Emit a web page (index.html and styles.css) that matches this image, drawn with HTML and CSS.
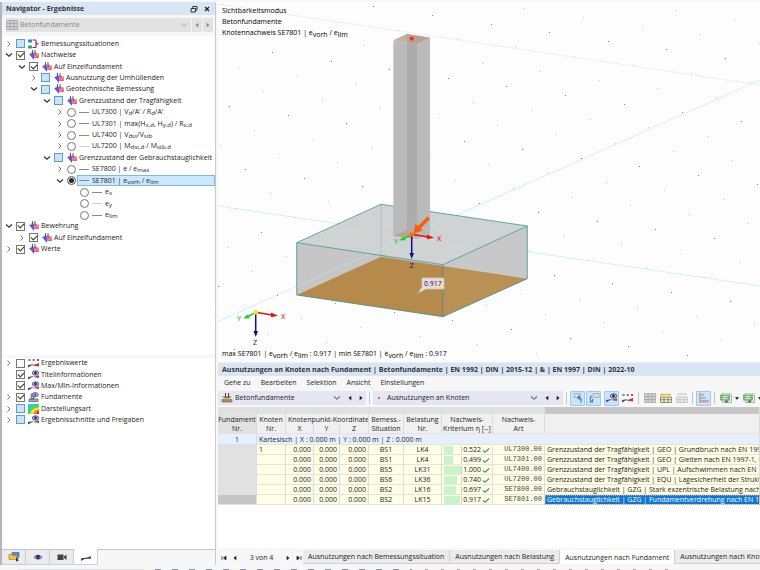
FILE: index.html
```html
<!DOCTYPE html>
<html lang="de">
  <head>
    <meta charset="utf-8" />
    <title>Ausnutzungen an Knoten nach Fundament</title>
    <link rel="stylesheet" href="styles.css">
  </head>
  <body>
    <!-- shared icons -->
    <svg class="symbols" aria-hidden="true">
      <symbol id="closed" viewBox="0 0 8 8"><path d="M2.5 1.5 5 4 2.5 6.5" fill="none" stroke="#777" /></symbol>
      <symbol id="open" viewBox="0 0 8 8"><path d="M1 2.5 4 5.3 7 2.5" fill="none" stroke="#333" stroke-width="1.2" /></symbol>
      <symbol id="left" viewBox="0 0 8 8"><path d="M5.3 1.7v4.6L2.5 4z" fill="currentColor" /></symbol>
      <symbol id="right" viewBox="0 0 8 8"><path d="M2.7 1.7v4.6L5.5 4z" fill="currentColor" /></symbol>
      <symbol id="design" viewBox="0 0 12 10">
        <path d="M1 4H6V10z" fill="#5656f8" />
        <path d="M6.200 3.500h4.600V8H6.200z" fill="#f0566c" />
        <path d="M7.300 7 10 4.500" stroke="#ffd8de" stroke-width=".8" />
        <path d="M4.500 0v4M7 0v3M2.500 3.200h6" stroke="#4a4a58" stroke-width=".9" fill="none" />
      </symbol>
      <symbol id="situation" viewBox="0 0 12 10">
        <path d="M0 .5h4v3H0z" fill="#3d7cf0" /><path d="M0 6.500h4v3H0z" fill="#23b34a" />
        <path d="M4.500 1h3.500v7.500H4.500" fill="none" stroke="#444" /><path d="M7.500 2.500 11 4.700 7.500 7z" fill="#f020e0" />
      </symbol>
      <symbol id="result" viewBox="0 0 12 10">
        <path d="M1 9V6.500L7 5.500z" fill="#2848b8" /><path d="M5 6.700 11 4v2.800z" fill="#d8302c" />
        <path d="M1 7.200 11 5.500" stroke="#333" stroke-width=".8" />
      </symbol>
      <symbol id="eyeresult" viewBox="0 0 12 10">
        <path d="M0 9.500V7l6-1z" fill="#2848b8" /><path d="M5 7 11 5.300v2.700z" fill="#d8302c" />
        <ellipse cx="7.500" cy="3" rx="3.200" ry="2.200" fill="#c4c8e6" stroke="#303878" stroke-width=".8" /><circle cx="7.500" cy="3" r="1.400" fill="#202868" />
      </symbol>
      <symbol id="values" viewBox="0 0 12 10">
        <path d="M0 9.500V7l6-1z" fill="#2848b8" /><path d="M4 7.500 11 5v3.500z" fill="#d8302c" />
        <path d="M.5 1l2 2m0-2-2 2M4.700 1l2 2m0-2-2 2M9 1l2 2m0-2-2 2" stroke="#444" stroke-width=".8" />
      </symbol>
      <symbol id="footing" viewBox="0 0 12 10">
        <path d="M1 7h9v2.500H1zM3 2h3v5H3z" fill="#aab" stroke="#556" stroke-width=".7" />
        <ellipse cx="7.200" cy="2.700" rx="3" ry="2.100" fill="#c4c8e6" stroke="#303878" stroke-width=".8" /><circle cx="7.200" cy="2.700" r="1" fill="#202868" />
      </symbol>
      <symbol id="rainbow" viewBox="0 0 12 10">
        <path d="M0 0h11v10H0z" fill="#2ec8e8" /><path d="M0 10C0 4 5 1 11 1v9z" fill="#48d848" />
        <path d="M2.500 10c0-4 4-6.500 8.500-6.500V10z" fill="#f8ec30" /><path d="M5.500 10c0-2.500 2.500-4.500 5.500-4.500V10z" fill="#f08020" /><path d="M8.500 10c0-1.500 1-2.500 2.500-2.500V10z" fill="#d82020" />
      </symbol>
      <symbol id="grid" viewBox="0 0 12 10"><path d="M.5 .5h11v9H.5zM.5 3.500h11M.5 6.500h11M4.200 .5v9M8 .5v9" fill="#d0d0d0" stroke="#a4a4a4" stroke-width=".8" /></symbol>
      <symbol id="check" viewBox="0 0 8 8"><path d="M1 4.500 3 6.300 7.200 2.500" fill="none" stroke="#3a9f62" stroke-width="1.200" /></symbol>
      <symbol id="export" viewBox="0 0 12 10">
        <path d="M2.500 0h7l2 2v7.500h-9z" fill="#f4f8f2" stroke="#7a9a7a" stroke-width=".7" /><path d="M0 1.500h10v6H0z" fill="#7fb27b" />
        <path d="M2 3.500h6M2 5.500h6M5 2.500v4" stroke="#dcecd9" stroke-width=".8" /><path d="M4 7.500h5L6.500 10z" fill="#2f7a38" />
      </symbol>
    </svg>

    <div class="window">
      <aside class="navigator">
        <header class="caption">
          <span>Navigator - Ergebnisse</span>
          <button type="button" class="plain" aria-label="Lösen"><svg viewBox="0 0 8 8"><path d="M1 3.500h4.500V7H1zM2.800 3.500v-2H7V5H5.500" fill="none" stroke="#222" stroke-width=".9" /></svg></button>
          <button type="button" class="plain" aria-label="Schließen"><svg viewBox="0 0 8 8"><path d="M2 2l4 4m0-4-4 4" stroke="#222" stroke-width="1.200" /></svg></button>
        </header>

        <div class="picker disabled">
          <svg class="icon"><use href="#grid" /></svg>
          <select aria-label="Modul" disabled><option>Betonfundamente</option></select>
          <svg class="chevron"><use href="#open" /></svg>
          <button type="button" disabled aria-label="Zurück"><svg><use href="#left" /></svg></button>
          <button type="button" disabled aria-label="Weiter"><svg><use href="#right" /></svg></button>
        </div>

        <div class="panel">
          <ul class="tree results">
            <li><button class="twist" aria-label="Öffnen"><svg><use href="#closed" /></svg></button><label><input type="checkbox" class="partial"><svg class="icon"><use href="#situation" /></svg>Bemessungssituationen</label></li>
            <li><button class="twist" aria-label="Schließen"><svg><use href="#open" /></svg></button><label><input type="checkbox" checked><svg class="icon"><use href="#design" /></svg>Nachweise</label></li>
            <li class="level-1"><button class="twist" aria-label="Schließen"><svg><use href="#open" /></svg></button><label><input type="checkbox" checked><svg class="icon"><use href="#design" /></svg>Auf Einzelfundament</label></li>
            <li class="level-2"><button class="twist" aria-label="Öffnen"><svg><use href="#closed" /></svg></button><label><input type="checkbox" class="partial"><svg class="icon"><use href="#design" /></svg>Ausnutzung der Umhüllenden</label></li>
            <li class="level-2"><button class="twist" aria-label="Schließen"><svg><use href="#open" /></svg></button><label><input type="checkbox" class="partial"><svg class="icon"><use href="#design" /></svg>Geotechnische Bemessung</label></li>
            <li class="level-3"><button class="twist" aria-label="Schließen"><svg><use href="#open" /></svg></button><label><input type="checkbox" class="partial"><svg class="icon"><use href="#design" /></svg>Grenzzustand der Tragfähigkeit</label></li>
            <li class="level-4"><button class="twist" aria-label="Öffnen"><svg><use href="#closed" /></svg></button><label><input type="radio" name="check"><i class="dash"></i><span>UL7300 | V<sub>d</sub>/A' / R<sub>d</sub>/A'</span></label></li>
            <li class="level-4"><button class="twist" aria-label="Öffnen"><svg><use href="#closed" /></svg></button><label><input type="radio" name="check"><i class="dash"></i><span>UL7301 | max(H<sub>x,d</sub>, H<sub>y,d</sub>) / R<sub>x,d</sub></span></label></li>
            <li class="level-4"><button class="twist" aria-label="Öffnen"><svg><use href="#closed" /></svg></button><label><input type="radio" name="check"><i class="dash"></i><span>UL7400 | V<sub>dst</sub>/V<sub>stb</sub></span></label></li>
            <li class="level-4"><button class="twist" aria-label="Öffnen"><svg><use href="#closed" /></svg></button><label><input type="radio" name="check"><i class="dash light"></i><span>UL7200 | M<sub>dst,d</sub> / M<sub>stb,d</sub></span></label></li>
            <li class="level-3"><button class="twist" aria-label="Schließen"><svg><use href="#open" /></svg></button><label><input type="checkbox" class="partial"><svg class="icon"><use href="#design" /></svg>Grenzzustand der Gebrauchstauglichkeit</label></li>
            <li class="level-4"><button class="twist" aria-label="Öffnen"><svg><use href="#closed" /></svg></button><label><input type="radio" name="check"><i class="dash"></i><span>SE7800 | e / e<sub>max</sub></span></label></li>
            <li class="level-4"><button class="twist" aria-label="Schließen"><svg><use href="#open" /></svg></button><label><input type="radio" name="check" checked><span class="mark"><i class="dash"></i><span>SE7801 | e<sub>vorh</sub> / e<sub>lim</sub></span></span></label></li>
            <li class="level-5"><label><input type="radio" name="part"><i class="dash"></i><span>e<sub>x</sub></span></label></li>
            <li class="level-5"><label><input type="radio" name="part"><i class="dash light"></i><span>e<sub>y</sub></span></label></li>
            <li class="level-5"><label><input type="radio" name="part"><i class="dash"></i><span>e<sub>lim</sub></span></label></li>
            <li><button class="twist" aria-label="Schließen"><svg><use href="#open" /></svg></button><label><input type="checkbox" checked><svg class="icon"><use href="#design" /></svg>Bewehrung</label></li>
            <li class="level-1"><button class="twist" aria-label="Öffnen"><svg><use href="#closed" /></svg></button><label><input type="checkbox" checked><svg class="icon"><use href="#design" /></svg>Auf Einzelfundament</label></li>
            <li><button class="twist" aria-label="Öffnen"><svg><use href="#closed" /></svg></button><label><input type="checkbox" checked><svg class="icon"><use href="#design" /></svg>Werte</label></li>
          </ul>
        </div>

        <div class="panel lower">
          <ul class="tree display">
            <li><button class="twist" aria-label="Öffnen"><svg><use href="#closed" /></svg></button><label><input type="checkbox"><svg class="icon"><use href="#values" /></svg>Ergebniswerte</label></li>
            <li class="leaf"><label><input type="checkbox" checked><svg class="icon"><use href="#eyeresult" /></svg>Titelinformationen</label></li>
            <li class="leaf"><label><input type="checkbox" checked><svg class="icon"><use href="#eyeresult" /></svg>Max/Min-Informationen</label></li>
            <li><button class="twist" aria-label="Öffnen"><svg><use href="#closed" /></svg></button><label><input type="checkbox" checked><svg class="icon"><use href="#footing" /></svg>Fundamente</label></li>
            <li><button class="twist" aria-label="Öffnen"><svg><use href="#closed" /></svg></button><label><input type="checkbox" class="partial"><svg class="icon"><use href="#rainbow" /></svg>Darstellungsart</label></li>
            <li><button class="twist" aria-label="Öffnen"><svg><use href="#closed" /></svg></button><label><input type="checkbox" class="partial"><svg class="icon"><use href="#eyeresult" /></svg>Ergebnisschnitte und Freigaben</label></li>
          </ul>
        </div>

        <nav class="nav-tabs">
          <button type="button" aria-label="Daten"><svg viewBox="0 0 12 10"><path d="M4 .5h7v5H4z" fill="#4a90d8" stroke="#2a5a98" stroke-width=".6" /><path d="M1 2.500h3l1 1h4v4H1z" fill="#f4c430" stroke="#a07818" stroke-width=".6" /><path d="M8 5v5l1.200-1.200L11 8.500z" fill="#333" /></svg></button>
          <button type="button" aria-label="Zeigen"><svg viewBox="0 0 12 10"><path d="M2 5.300Q6 1 10 5.300 6 9 2 5.300z" fill="#d8dcf4" stroke="#282c60" stroke-width=".8" /><circle cx="6" cy="5" r="1.900" fill="#20286c" /></svg></button>
          <button type="button" aria-label="Ansichten"><svg viewBox="0 0 12 10"><path d="M1.500 2.500h6v5.500h-6zM8 4.500l2.500-2V8L8 6z" fill="#444" /></svg></button>
          <button type="button" class="active" aria-label="Ergebnisse"><svg><use href="#result" /></svg></button>
        </nav>
      </aside>

      <main>
        <section class="scene">
          <svg class="model" viewBox="218 2 542 360" preserveAspectRatio="xMinYMin slice">
            <path class="faint" d="M218 4 760 85" />
            <path class="axis-line" d="M218 206 760 286M218 321.500 760 80" />
            <g id="dots"></g>

            <!-- footing -->
            <path fill="#cbcece" d="M296.700 242.700 381 204.300 527.300 226 443 264.700z" fill-opacity=".9" />
            <path fill="#c6c6c6" d="M296.700 242.700 443 264.700V316.700L296.700 295z" />
            <path fill="#c8c8c8" d="M443 264.700 527.300 226V278.700L443 316.700z" />
            <path fill="#b58a4a" d="M296.700 295 381 256.700 443 266V316.700z" />
            <path fill="#bb9054" d="M443 266 527.300 278.700 443 316.700z" />
            <path class="edge back" d="M381 204.300v52.400" />
            <path class="axis-line" d="M297 286.300 527 184" opacity=".4" />
            <path class="edge" d="M296.700 242.700 381 204.300 527.300 226 443 264.700zM296.700 242.700V295L443 316.700V264.700M443 316.700 527.300 278.700V226" />

            <!-- column -->
            <path fill="#b9b9b9" d="M393.300 40.300 416.500 44 430 37.700V234.300L416.500 239 393.300 236z" fill-opacity=".97" />
            <path fill="#acacac" d="M407 42 417 44V237L407 230z" />
            <path fill="#c5afa4" d="M393.300 40.300 406.700 34 430 37.700 416.500 44z" />
            <path fill="#b8a097" d="M407 34 430 37.700 416.500 44 407 42z" />
            <path fill="#c0a090" d="M393.300 236 407 230 411 231v7z" />
            <path fill="#f22" d="M410 37h3.500v3.500H410z" />

            <!-- local axes -->
            <g id="triad" stroke-width="1.500">
              <path d="M411.700 234.300 428 237" stroke="#e81010" /><path d="M427 234.500 434 237.800 427 239.200z" fill="#e81010" />
              <path d="M411.700 234.300 404 238.500" stroke="#10d820" /><path d="M399 240.500 403.500 236.500 406 240.300z" fill="#10d820" />
              <path d="M411.700 234.300V254" stroke="#101080" /><path d="M409.500 253h4.500L411.700 259z" fill="#101080" />
            </g>
            <circle cx="411.700" cy="234.500" r="2.300" fill="#ff6a10" />
            <path fill="#ff5a08" d="M427.500 216.500 430.200 219 420.500 228.500 423 230.500 413.500 233.500 415.500 223.500 418 226z" />
            <use href="#triad" x="-156" y="78" />
            <circle cx="255.700" cy="312.300" r="2.300" fill="#f4e810" />
            <g class="axis-name">
              <text x="437" y="241" fill="#e81010">X</text><text x="394" y="244" fill="#10c820">Y</text><text x="409.500" y="268" fill="#101080">Z</text>
              <text x="281" y="319" fill="#e81010">X</text><text x="237" y="321" fill="#10c820">Y</text><text x="253" y="345" fill="#1818a0">Z</text>
            </g>

            <path d="M422 278h22v11H426L418 293 422 287z" fill="#e8dcc4" stroke="#c8c8d0" stroke-width=".7" />
            <circle cx="418" cy="292.500" r="1.700" fill="#a09c98" />
            <text class="tag" x="424" y="286">0.917</text>
          </svg>
          <div class="info">
            <p>Sichtbarkeitsmodus</p>
            <p>Betonfundamente</p>
            <p>Knotennachweis SE7801 | e<sub>vorh</sub> / e<sub>lim</sub></p>
          </div>
          <p class="extremes">max SE7801 | e<sub>vorh</sub> / e<sub>lim</sub> : 0.917 | min SE7801 | e<sub>vorh</sub> / e<sub>lim</sub> : 0.917</p>
        </section>

        <section class="tables">
          <header class="caption">Ausnutzungen an Knoten nach Fundament | Betonfundamente | EN 1992 | DIN | 2015-12 | &amp; | EN 1997 | DIN | 2022-10</header>
          <nav class="menu">
            <a href="#">Gehe zu</a><a href="#">Bearbeiten</a><a href="#">Selektion</a><a href="#">Ansicht</a><a href="#">Einstellungen</a>
          </nav>
          <div class="toolbar">
            <div class="picker module">
              <svg class="icon" viewBox="0 0 12 10"><path d="M1 6.500h10V9H1z" fill="#b58a4a" stroke="#665" stroke-width=".6" /><path d="M3.500 4h5v2.500h-5z" fill="#d8a850" /><path d="M4.500 0v4M7.500 0v4M2 4h8" stroke="#444" /></svg>
              <select aria-label="Modul"><option>Betonfundamente</option></select>
              <svg class="chevron"><use href="#open" /></svg>
              <button type="button" aria-label="Zurück"><svg><use href="#left" /></svg></button>
              <button type="button" aria-label="Weiter"><svg><use href="#right" /></svg></button>
            </div>
            <i class="sep"></i>
            <div class="picker kind">
              <svg class="icon" viewBox="0 0 12 10"><path d="M5 4h2v2H5z" fill="#d86464" /></svg>
              <select aria-label="Tabelle"><option>Ausnutzungen an Knoten</option></select>
              <svg class="chevron"><use href="#open" /></svg>
              <button type="button" aria-label="Zurück"><svg><use href="#left" /></svg></button>
              <button type="button" aria-label="Weiter"><svg><use href="#right" /></svg></button>
            </div>
            <i class="sep"></i>
            <div class="tools">
              <button type="button" class="on" aria-label="Auswahl zur Tabelle"><svg viewBox="0 0 12 10"><path d="M2 .5h6v4H2z" fill="#d8dde4" stroke="#99a" stroke-width=".7" /><path d="M8.500 9.500Q11 5 6 4.500M8 2.500 5.700 4.500 8 6.500" fill="none" stroke="#2d7cc0" stroke-width="1.100" /></svg></button>
              <button type="button" class="on" aria-label="Auswahl aus Tabelle"><svg viewBox="0 0 12 10"><path d="M5 .5h6v4H5z" fill="#d8dde4" stroke="#99a" stroke-width=".7" /><path d="M4 3Q.5 5 3.500 8.500M1.500 9h3V6" fill="none" stroke="#2d7cc0" stroke-width="1.100" /></svg></button>
            </div>
            <div class="tools">
              <button type="button" class="on" aria-label="Ergebnisse anzeigen"><svg><use href="#eyeresult" /></svg></button>
              <button type="button" aria-label="Werte anzeigen"><svg><use href="#values" /></svg></button>
            </div>
            <i class="sep"></i>
            <div class="tools">
              <button type="button" aria-label="Tabelle"><svg><use href="#grid" /></svg></button>
              <button type="button" aria-label="Zeilen"><svg viewBox="0 0 12 10"><path d="M.5 4h11v5.500H.5zM.5 6.700h11M4 4v5.500M8 4v5.500" fill="#f6f0a8" stroke="#777" stroke-width=".8" /><path d="M1 3V1.500h9V3" fill="none" stroke="#e8b820" stroke-width="1.300" /></svg></button>
              <button type="button" aria-label="Filter"><svg viewBox="0 0 12 10"><path d="M.5 4h11v5.500H.5zM.5 6.700h11M4 4v5.500M8 4v5.500" fill="#eee" stroke="#bbb" stroke-width=".8" /><path d="M2 2.500V1h8v1.500" fill="none" stroke="#bbb" /></svg></button>
            </div>
            <i class="sep"></i>
            <div class="tools">
              <button type="button" class="on" aria-label="Balken"><svg viewBox="0 0 12 10"><path d="M2 0v10" stroke="#889" /><path d="M2 .8h4v2H2zM2 7h9v2.500H2z" fill="#e09aa4" /><path d="M2 4h6v2H2z" fill="#9cc4b0" /></svg></button>
            </div>
            <i class="sep"></i>
            <div class="tools">
              <button type="button" aria-label="Export"><svg><use href="#export" /></svg></button><i class="drop"></i>
              <button type="button" aria-label="Export alle"><svg><use href="#export" /></svg></button><i class="drop"></i>
            </div>
          </div>

          <div class="sheet">
            <table>
              <colgroup><col class="c-no"><col class="c-node"><col class="c-x"><col class="c-y"><col class="c-z"><col class="c-sit"><col class="c-load"><col class="c-crit"><col class="c-type"><col></colgroup>
              <thead>
                <tr class="letters"><td></td><td></td><td></td><td></td><td></td><td></td><td></td><td></td><td></td><td class="current"></td></tr>
                <tr>
                  <th rowspan="2" class="first">Fundament<br>Nr.</th><th rowspan="2">Knoten<br>Nr.</th><th colspan="3" class="group">Knotenpunkt-Koordinaten</th>
                  <th rowspan="2">Bemess.-<br>Situation</th><th rowspan="2">Belastung<br>Nr.</th><th rowspan="2">Nachweis-<br>Kriterium η [--]</th><th rowspan="2">Nachweis-<br>Art</th><th rowspan="2"></th>
                </tr>
                <tr><th>X</th><th>Y</th><th>Z</th></tr>
              </thead>
              <tbody>
                <tr class="system"><td class="first">1</td><td colspan="9">Kartesisch | X : 0.000 m | Y : 0.000 m | Z : 0.000 m</td></tr>
                <tr><td class="first"></td><td>1</td><td class="num">0.000</td><td class="num">0.000</td><td class="num">0.000</td><td class="mid">BS1</td><td class="mid">LK4</td><td><div class="ratio"><i class="bar"><b style="width:52.2%"></b></i>0.522<svg><use href="#check" /></svg></div></td><td class="code">UL7300.00</td><td>Grenzzustand der Tragfähigkeit | GEO | Grundbruch nach EN 1997-1, 6.5.2</td></tr>
                <tr><td class="first"></td><td></td><td class="num">0.000</td><td class="num">0.000</td><td class="num">0.000</td><td class="mid">BS1</td><td class="mid">LK4</td><td><div class="ratio"><i class="bar"><b style="width:49.9%"></b></i>0.499<svg><use href="#check" /></svg></div></td><td class="code">UL7301.00</td><td>Grenzzustand der Tragfähigkeit | GEO | Gleiten nach EN 1997-1, 6.5.3</td></tr>
                <tr><td class="first"></td><td></td><td class="num">0.000</td><td class="num">0.000</td><td class="num">0.000</td><td class="mid">BS5</td><td class="mid">LK31</td><td><div class="ratio"><i class="bar"><b style="width:100%"></b></i>1.000<svg><use href="#check" /></svg></div></td><td class="code">UL7400.00</td><td>Grenzzustand der Tragfähigkeit | UPL | Aufschwimmen nach EN 1997-1</td></tr>
                <tr><td class="first"></td><td></td><td class="num">0.000</td><td class="num">0.000</td><td class="num">0.000</td><td class="mid">BS6</td><td class="mid">LK36</td><td><div class="ratio"><i class="bar"><b style="width:74%"></b></i>0.740<svg><use href="#check" /></svg></div></td><td class="code">UL7200.00</td><td>Grenzzustand der Tragfähigkeit | EQU | Lagesicherheit der Struktur nach EN 1997-1</td></tr>
                <tr><td class="first"></td><td></td><td class="num">0.000</td><td class="num">0.000</td><td class="num">0.000</td><td class="mid">BS2</td><td class="mid">LK16</td><td><div class="ratio"><i class="bar"><b style="width:69.7%"></b></i>0.697<svg><use href="#check" /></svg></div></td><td class="code">SE7800.00</td><td>Gebrauchstauglichkeit | GZG | Stark exzentrische Belastung nach EN 1997-1</td></tr>
                <tr class="picked"><td class="first"></td><td></td><td class="num">0.000</td><td class="num">0.000</td><td class="num">0.000</td><td class="mid">BS2</td><td class="mid">LK15</td><td><div class="ratio"><i class="bar"><b style="width:91.7%"></b></i>0.917<svg><use href="#check" /></svg></div></td><td class="code">SE7801.00</td><td class="cursor">Gebrauchstauglichkeit | GZG | Fundamentverdrehung nach EN 1997-1</td></tr>
              </tbody>
            </table>
          </div>

          <footer class="sheet-tabs">
            <div class="pager">
              <button type="button" class="plain" aria-label="Erste"><svg viewBox="0 0 8 8"><path d="M2 2v4M6 2v4L3.500 4z" fill="#222" stroke="#222" stroke-width=".7" /></svg></button>
              <button type="button" class="plain" aria-label="Vorherige"><svg><use href="#left" /></svg></button>
              <span>3 von 4</span>
              <button type="button" class="plain" aria-label="Nächste"><svg><use href="#right" /></svg></button>
              <button type="button" class="plain" aria-label="Letzte"><svg viewBox="0 0 8 8"><path d="M6 2v4M2 2v4L4.500 4z" fill="#222" stroke="#222" stroke-width=".7" /></svg></button>
            </div>
            <button type="button">Ausnutzungen nach Bemessungssituation</button>
            <button type="button">Ausnutzungen nach Belastung</button>
            <button type="button" class="active">Ausnutzungen nach Fundament</button>
            <button type="button">Ausnutzungen nach Knoten</button>
          </footer>
        </section>
      </main>
    </div>
    <div class="strip"><i class="field"></i><i class="snaps"></i><i class="views"></i></div>

    <script src="scene.js"></script>
  </body>
</html>
```

FILE: styles.css
```css
* {
  box-sizing: border-box;
}
body {
  margin: 0;
  height: 100vh;
  display: flex;
  flex-direction: column;
  overflow: hidden;
  background-color: #f7f7f7;
  color: #1c1c1c;
  font-family: "Open Sans", "Noto Sans", sans-serif;
  font-size: 7px;
  line-height: 10px;
}
p, ul {
  margin: 0;
  padding: 0;
}
button, select, input {
  font: inherit;
  color: inherit;
  margin: 0;
  padding: 0;
  border: none;
  border-radius: 0;
  background: none;
}
svg {
  display: block;
  flex: none;
  width: 8px;
  height: 8px;
}
.symbols {
  position: absolute;
  width: 0;
  height: 0;
}
.icon {
  width: 12px;
  height: 10px;
}
sub {
  font-size: 6px;
  line-height: 0;
  vertical-align: -1px;
}

.window {
  flex: 1;
  min-height: 0;
  display: flex;
  gap: 2px;
  padding-top: 2px;
}
.caption {
  display: flex;
  align-items: center;
  gap: 5px;
  height: 13px;
  padding: 0 4px;
  background-color: #d8e5f3;
  font-weight: 700;
  color: #333;
  white-space: nowrap;
}
.caption span {
  flex: 1;
}

/* Navigator */
.navigator {
  width: 216px;
  display: flex;
  flex-direction: column;
  border-left: 2px solid #b4b4bc;
  border-right: 1px solid #c8c8d4;
}
.picker {
  display: flex;
  align-items: center;
  height: 14px;
  background-color: #e6e6f2;
}
.picker select {
  flex: 1;
  min-width: 0;
  appearance: none;
  padding-left: 2px;
}
.picker button {
  width: 11px;
  height: 14px;
  display: grid;
  place-items: center;
}
.picker .chevron {
  margin-right: 3px;
  opacity: 0.6;
}
.picker.disabled {
  margin: 3px 2px 0 4px;
  background-color: #e2e2e2;
  color: #858585;
}
.picker.disabled select {
  opacity: 1;
}
.picker.disabled .chevron {
  opacity: 0.2;
}
.picker.disabled button {
  border-left: 1px solid #f4f4f4;
}
.panel {
  flex: 1;
  min-height: 0;
  margin-top: 4px;
  padding-top: 2px;
  background-color: #fff;
}
.panel.lower {
  flex: 0 0 34%;
  margin-top: 3px;
  padding-top: 0;
}
.tree {
  display: grid;
  grid-auto-rows: 1fr;
  list-style: none;
  white-space: nowrap;
}
.results {
  height: 217px;
}
.display {
  height: 68px;
}
.tree li {
  display: flex;
  align-items: center;
  padding-left: 3px;
}
.tree label {
  flex: 1;
  display: flex;
  align-items: center;
}
.tree .icon {
  margin: 0 1px 0 3px;
}
.twist {
  width: 11px;
  height: 10px;
}
.tree .leaf { padding-left: 14px; }
.tree .level-1 { padding-left: 16px; }
.tree .level-2 { padding-left: 28px; }
.tree .level-3 { padding-left: 41px; }
.tree .level-4 { padding-left: 54px; }
.tree .level-5 { padding-left: 78px; }
.tree input {
  appearance: none;
  flex: none;
  width: 9px;
  height: 9px;
  border: 1px solid #777;
  background-color: #fff;
}
.tree input[type="checkbox"]:checked {
  display: grid;
  place-items: center;
}
.tree input[type="checkbox"]:checked::before {
  content: "";
  width: 5px;
  height: 3px;
  border-left: 1px solid #333;
  border-bottom: 1px solid #333;
  transform: translateY(-1px) rotate(-45deg);
}
.tree input.partial {
  border-color: #5b9bd0;
  background-color: #cce4f7;
}
.tree input[type="radio"] {
  border-radius: 50%;
}
.tree input[type="radio"]:checked {
  background-color: #222;
  box-shadow: inset 0 0 0 1px #fff;
}
.dash {
  width: 10px;
  height: 1px;
  margin: 0 3px;
  background-color: #8a8a8a;
}
.dash.light {
  background-color: #d0d0d0;
}
.mark {
  flex: 1;
  display: flex;
  align-items: center;
  height: 11px;
  margin-left: 1px;
  background-color: #cce8ff;
  outline: 1px solid #7fb8e8;
  outline-offset: -1px;
}
.mark .dash {
  margin-left: 2px;
}
.nav-tabs {
  display: flex;
  height: 16px;
  border-top: 1px solid #c4c4cc;
}
.nav-tabs button {
  width: 24px;
  height: 15px;
  display: grid;
  place-items: center;
  background-color: #ebebee;
  border-right: 1px solid #ccccd4;
  border-bottom: 1px solid #ccccd4;
}
.nav-tabs svg {
  width: 12px;
  height: 10px;
}
.nav-tabs .active {
  margin-top: -1px;
  height: 16px;
  background-color: #fff;
}

/* 3D view */
main {
  flex: 1;
  min-width: 0;
  display: flex;
  flex-direction: column;
}
.scene {
  flex: 1;
  min-height: 0;
  display: grid;
  grid-template: minmax(0, 1fr) / minmax(0, 1fr);
  background-color: #fdfdfd;
  line-height: 11px;
  color: #000;
}
.scene > * {
  grid-area: 1 / 1;
}
.scene sub {
  font-size: 7px;
  vertical-align: -2px;
}
.model {
  width: 100%;
  height: 100%;
}
.faint {
  stroke: #eeeeee;
}
.axis-line {
  stroke: #c9f5f5;
  fill: none;
}
.edge {
  fill: none;
  stroke: #3f9696;
  stroke-width: 0.8;
}
.edge.back {
  stroke: #a8bcbc;
}
.axis-name {
  font-family: Roboto, sans-serif;
}
.tag {
  font-family: Roboto, sans-serif;
  fill: #2020d0;
}
.info {
  padding: 3px 4px;
}
.extremes {
  align-self: end;
  padding: 0 4px 3px;
}

/* Result tables */
.tables {
  height: 203px;
  display: flex;
  flex-direction: column;
  border-top: 1px solid #eeeeee;
}
.menu {
  display: flex;
  align-items: center;
  gap: 10px;
  height: 14px;
  padding: 0 6px;
}
.menu a {
  color: inherit;
  text-decoration: none;
}
.toolbar {
  display: flex;
  align-items: center;
  gap: 3px;
  height: 16px;
  overflow: hidden;
}
.toolbar > * {
  flex: none;
}
.module {
  width: 148px;
  padding-left: 3px;
}
.kind {
  width: 190px;
}
.sep {
  width: 1px;
  height: 12px;
  background-color: #c4c4c4;
}
.tools {
  display: flex;
  align-items: center;
  gap: 1px;
}
.tools button {
  width: 15px;
  height: 15px;
  display: grid;
  place-items: center;
}
.tools svg {
  width: 12px;
  height: 10px;
}
.tools .on {
  background-color: #cce4fb;
  border: 1px solid #9acbf5;
  border-radius: 1px;
}
.drop {
  border: 2px solid transparent;
  border-top: 3px solid #333;
  border-bottom: none;
  margin: 0 1px;
}
.sheet {
  flex: 1;
  min-height: 0;
  margin-top: 1px;
  overflow: hidden;
  background-color: #fff;
}
table {
  width: 100%;
  table-layout: fixed;
  border-collapse: separate;
  border-spacing: 0;
  white-space: nowrap;
}
.c-no { width: 39px; }
.c-node { width: 29px; }
.c-x { width: 28px; }
.c-y { width: 26px; }
.c-z { width: 29px; }
.c-sit { width: 35px; }
.c-load { width: 38px; }
.c-crit { width: 51px; }
.c-type { width: 52px; }
th, td {
  height: 10px;
  padding: 0 2px;
  overflow: hidden;
  line-height: 9px;
  border-right: 1px solid #dcdcd8;
  border-bottom: 1px solid #e4e4dc;
}
th {
  padding: 0;
  font-weight: 400;
  text-align: center;
  vertical-align: middle;
  background-color: #f0f0f0;
}
th.group {
  text-align: left;
  padding-left: 2px;
  border-bottom: none;
}
.letters td {
  height: 7px;
  padding: 0;
  line-height: 5px;
  background-color: #e0e0e0;
  border-bottom: none;
}
.letters .current {
  background-color: #c6c6c6;
}
tbody td {
  background-color: #fffee6;
}
.first, tbody .first {
  background-color: #e1e1e1;
  text-align: center;
  border-bottom-color: #e1e1e1;
}
.system td {
  height: 11px;
  background-color: #e6f0fc;
}
.num {
  text-align: right;
}
.mid {
  text-align: center;
}
.code {
  font-family: "Liberation Mono", monospace;
  text-align: right;
  color: #444;
}
.ratio {
  display: flex;
  align-items: center;
  gap: 1px;
}
.bar {
  width: 20px;
  height: 8px;
  border-right: 1px solid #d0d0d0;
}
.bar b {
  display: block;
  height: 8px;
  background-color: #c8f5c8;
}
.picked .first {
  background-color: #c6c6c6;
}
.picked .cursor {
  background-color: #0a78d8;
  color: #fff;
  outline: 1px dotted #e8a050;
  outline-offset: -1px;
}
.sheet-tabs {
  display: flex;
  height: 17px;
  padding-top: 2px;
  overflow: hidden;
  white-space: nowrap;
}
.sheet-tabs > button {
  flex: none;
  height: 14px;
  padding: 1px 5px 0;
  background-color: #ebebeb;
  border-right: 1px solid #cfcfd6;
  border-bottom: 1px solid #cfcfd6;
}
.sheet-tabs > .active {
  background-color: #fff;
  border-bottom: none;
}
.pager {
  flex: none;
  width: 85px;
  display: flex;
  align-items: center;
  gap: 3px;
  padding-left: 2px;
}
.pager span {
  flex: 1;
  text-align: center;
}

/* top edge of the status bar */
.strip {
  height: 5px;
  display: flex;
  align-items: end;
  padding: 0 80px 0 18px;
}
.strip i {
  height: 1px;
}
.field {
  width: 126px;
  background-color: #dedeee;
}
.snaps {
  flex: 1;
  background: repeating-linear-gradient(90deg, #f7f7f7 0 11px, #8888b8 11px 17px);
}
.views {
  flex: 1;
  background: repeating-linear-gradient(90deg, #f7f7f7 0 13px, #f08888 13px 16px);
}
```

FILE: scene.js
```js
// grid points of the work plane
const dots = document.getElementById("dots");

for (let i = -8; i < 24; i++) {
  for (let j = -14; j < 22; j++) {
    const x = Math.round(272 + i * 33.8 + j * 24.8);
    const y = Math.round(52 - i * 15.2 + j * 23.8);
    if (x < 218 || x > 760 || y < 4 || y > 360) continue;

    const dot = document.createElementNS("http://www.w3.org/2000/svg", "rect");
    dot.setAttribute("x", x);
    dot.setAttribute("y", y);
    dot.setAttribute("width", 1);
    dot.setAttribute("height", 1);
    dot.setAttribute("fill", (i + 2 * j) % 3 ? "#cccccc" : "#8c8c8c");
    dots.appendChild(dot);
  }
}
```
